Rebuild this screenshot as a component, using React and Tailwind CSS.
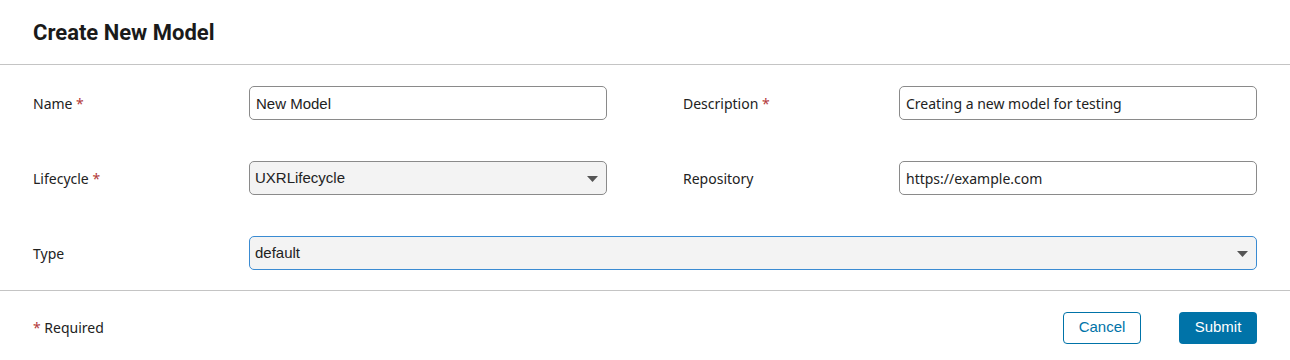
import React, { useState } from 'react';

const Req = () => <span className="text-[#b33a3a]"> *</span>;

const Field = ({ label, required, children, wide }) => (
  <div className={`flex items-center ${wide ? 'col-span-2' : ''}`}>
    <label className="w-[216px] shrink-0 text-[14px] text-[#222]">
      {label}
      {required && <Req />}
    </label>
    {children}
  </div>
);

const TextInput = ({ value, onChange, font }) => (
  <input
    value={value}
    onChange={(e) => onChange(e.target.value)}
    className={`w-full h-[34px] px-[6px] rounded-[5px] border border-[#8a8a8a] bg-white text-[#222] outline-none ${font}`}
  />
);

const SelectBox = ({ value, options, onChange, focused }) => (
  <div className="relative w-full">
    <select
      value={value}
      onChange={(e) => onChange(e.target.value)}
      className={`w-full h-[34px] pl-[5px] pr-8 appearance-none rounded-[5px] border bg-[#f3f3f3] text-[15px] text-[#222] outline-none font-['Liberation_Sans',Arial,sans-serif] ${focused ? 'border-[#3a8bd2]' : 'border-[#8a8a8a]'}`}
    >
      {options.map((o) => (
        <option key={o} value={o}>{o}</option>
      ))}
    </select>
    <svg className="absolute right-[9px] top-[15px] pointer-events-none" width="11" height="6" viewBox="0 0 11 6">
      <path d="M0 0h11L5.5 6z" fill="#555" />
    </svg>
  </div>
);

const App = () => {
  const [form, setForm] = useState({
    name: 'New Model',
    description: 'Creating a new model for testing',
    lifecycle: 'UXRLifecycle',
    repository: 'https://example.com',
    type: 'default'
  });

  const update = (field) => (value) => setForm((prev) => ({ ...prev, [field]: value }));

  return (
    <div className="w-[1290px] h-[360px] bg-white font-['Noto_Sans','Open_Sans',sans-serif]">
      <div className="h-[65px] px-[33px] flex items-center border-b border-[#c4c4c4]">
        <h1 className="text-[22px] font-bold text-[#1a1a1a] font-['Roboto',sans-serif]">
          Create New Model
        </h1>
      </div>

      <div className="px-[33px] pt-[21px] pb-[20px] grid grid-cols-2 gap-x-[76px] gap-y-[41px] border-b border-[#c4c4c4]">
        <Field label="Name" required>
          <TextInput value={form.name} onChange={update('name')} font="text-[15px] font-['Liberation_Sans',Arial,sans-serif]" />
        </Field>
        <Field label="Description" required>
          <TextInput value={form.description} onChange={update('description')} font="text-[14px] font-['Noto_Sans',sans-serif]" />
        </Field>
        <Field label="Lifecycle" required>
          <SelectBox value={form.lifecycle} options={['UXRLifecycle', 'Default']} onChange={update('lifecycle')} />
        </Field>
        <Field label="Repository">
          <TextInput value={form.repository} onChange={update('repository')} font="text-[14px] font-['Noto_Sans',sans-serif]" />
        </Field>
        <Field label="Type" wide>
          <SelectBox value={form.type} options={['default', 'custom']} onChange={update('type')} focused />
        </Field>
      </div>

      <div className="px-[33px] h-[73px] flex items-center justify-between">
        <span className="text-[14px] text-[#222]">
          <span className="text-[#b33a3a]">*</span> Required
        </span>
        <div className="flex gap-[38px] font-['Liberation_Sans',Arial,sans-serif] text-[15px]">
          <button className="w-[78px] h-[32px] rounded-[4px] border border-[#0073a8] text-[#0073a8] bg-white">
            Cancel
          </button>
          <button className="w-[78px] h-[32px] rounded-[4px] bg-[#0073a8] text-white">
            Submit
          </button>
        </div>
      </div>
    </div>
  );
};

export default App;
